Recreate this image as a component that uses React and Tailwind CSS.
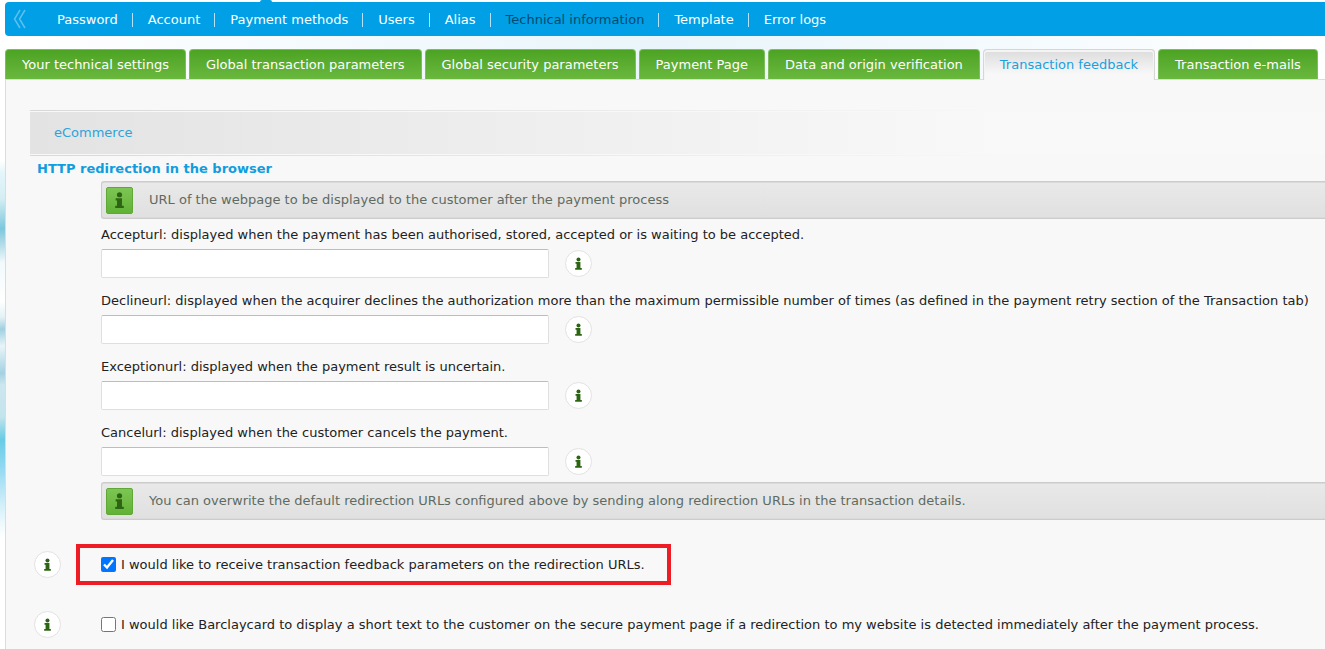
import { useState } from 'react'

const menuItems = [
  'Password',
  'Account',
  'Payment methods',
  'Users',
  'Alias',
  'Technical information',
  'Template',
  'Error logs',
]

const tabs = [
  'Your technical settings',
  'Global transaction parameters',
  'Global security parameters',
  'Payment Page',
  'Data and origin verification',
  'Transaction feedback',
  'Transaction e-mails',
]

const urlFields = [
  {
    id: 'accepturl',
    label: 'Accepturl: displayed when the payment has been authorised, stored, accepted or is waiting to be accepted.',
  },
  {
    id: 'declineurl',
    label:
      'Declineurl: displayed when the acquirer declines the authorization more than the maximum permissible number of times (as defined in the payment retry section of the Transaction tab)',
  },
  {
    id: 'exceptionurl',
    label: 'Exceptionurl: displayed when the payment result is uncertain.',
  },
  {
    id: 'cancelurl',
    label: 'Cancelurl: displayed when the customer cancels the payment.',
  },
]

const InfoGlyph = ({ className }) => (
  <svg viewBox="0 0 8 14" className={className} fill="currentColor" aria-hidden="true">
    <circle cx="4" cy="2.3" r="2.3" />
    <path d="M.6 5.4h5.6V12h1.6v2H.2v-2h1.6V7.4H.6z" />
  </svg>
)

const InfoButton = ({ label }) => (
  <button
    type="button"
    aria-label={label}
    className="flex size-[27px] shrink-0 items-center justify-center rounded-full border border-[#e2e2e2] bg-white text-[#2c6414]"
  >
    <InfoGlyph className="h-[13px] w-[7px]" />
  </button>
)

const Notice = ({ children }) => (
  <div className="flex h-[38px] items-center rounded-l-[3px] border-y border-l border-[#cccccc] bg-linear-to-b from-[#e9e9e9] to-[#e0e0e0] pl-1 text-[#5f6b62] shadow-[inset_0_1px_0_#dadada,inset_0_-1px_0_#dadada]">
    <span className="mr-4 flex size-[27px] shrink-0 items-center justify-center rounded-[2px] border border-[#5fa838] bg-linear-to-b from-[#7cc653] to-[#62b236] text-[#2c6414]">
      <InfoGlyph className="h-4 w-[9px]" />
    </span>
    <p>{children}</p>
  </div>
)

const OptionRow = ({ id, label, checked, onChange, highlighted }) => (
  <div className="flex items-center gap-[15px]">
    <InfoButton label={`Help: ${label}`} />
    <label
      htmlFor={id}
      className={`flex h-[41px] items-center gap-[5px] border-4 pr-[22px] pl-[21px] ${
        highlighted ? 'border-[#ee1c25]' : 'border-transparent'
      }`}
    >
      <input
        id={id}
        type="checkbox"
        checked={checked}
        onChange={(e) => onChange(e.target.checked)}
        className="size-[15px] accent-[#0075ff]"
      />
      {label}
    </label>
  </div>
)

const App = () => {
  const [activeTab, setActiveTab] = useState('Transaction feedback')
  const [feedback, setFeedback] = useState(true)
  const [shortText, setShortText] = useState(false)

  return (
    <div className="flex min-h-screen overflow-hidden bg-white font-['DejaVu_Sans',Verdana,sans-serif] text-[13px] leading-5 whitespace-nowrap text-[#222]">
      {/* Blue swirl at the page edge */}
      <div className="w-[5px] shrink-0 bg-[linear-gradient(175deg,#fff_160px,#e4f6fa_172px,#d4eef4_198px,#7cc8dc_228px,#b4dce8_244px,#f2fafc_262px,#fff_300px,#e4f2f6_316px,#a0d0e0_328px,#e8f4f8_345px,#a4d2e2_372px,#cce6ee_384px,#c4e4ec_415px,#68cce4_438px,#90d8f2_465px,#b4e4f6_485px,#e4f6fc_515px,#fff_535px)]" />

      <div className="flex min-w-0 flex-1 flex-col">
        {/* Section menu */}
        <div className="ml-[255px] h-[2px] w-3 rounded-t-full bg-[#009fe6]" />
        <nav className="flex h-[34px] shrink-0 items-center rounded-l-[4px] bg-[#009fe6] text-white">
          <button type="button" aria-label="Back" className="ml-2 text-[#5cc0ee]">
            <svg viewBox="0 0 13 20" className="h-5 w-[13px]" fill="none" stroke="currentColor" strokeWidth="1.5">
              <path d="M7 1 1.5 10 7 19M12 1 6.5 10 12 19" />
            </svg>
          </button>
          <ul className="ml-4 flex items-center divide-x divide-[#b4e2f8] pt-[2px]">
            {menuItems.map((item) => (
              <li key={item} className="h-[14px] pr-[14px] pl-[15px]">
                <a
                  href="#"
                  className={`block leading-[14px] ${item === 'Technical information' ? 'text-[#004a6e]' : ''}`}
                >
                  {item}
                </a>
              </li>
            ))}
          </ul>
        </nav>

        {/* Tabs */}
        <div className="flex shrink-0 gap-[3px] bg-linear-to-r from-white via-[#e9f5fa] to-white pt-[13px]">
          {tabs.map((tab) => (
            <button
              key={tab}
              type="button"
              onClick={() => setActiveTab(tab)}
              className={`shrink-0 rounded-t-[4px] border-x border-t px-4 ${
                tab === activeTab
                  ? 'relative -mb-px h-[31px] border-[#d6d6d6] bg-linear-to-b from-[#dcdcdc] to-[#f8f8f8] to-80% text-[#1a9fe0] shadow-[inset_0_1px_0_1px_#f4f4f4]'
                  : 'h-[30px] border-[#7fbd5c] bg-linear-to-b from-[#4ca322] to-[#6ab83e] text-white'
              }`}
            >
              {tab}
            </button>
          ))}
        </div>

        <main className="flex-1 border-t border-l border-[#dcdcdc] bg-[#f8f8f8] pt-[30px] pl-6">
          <div className="bg-linear-to-r from-[#d8d8d8] to-transparent to-[980px] py-px">
            <div className="bg-[#f8f8f8] py-px">
              <h2 className="bg-linear-to-r from-[#e3e3e3] to-[#f9f9f9] to-[980px] py-[11px] pl-6 text-[#2da3dc]">
                eCommerce
              </h2>
            </div>
          </div>

          <h3 className="mt-[3px] pl-[7px] font-bold text-[#0f9de0]">HTTP redirection in the browser</h3>

          <section className="mt-[2px] pl-[71px]">
            <Notice>URL of the webpage to be displayed to the customer after the payment process</Notice>
            <div className="flex flex-col gap-[13px] py-[6px]">
              {urlFields.map((field) => (
                <div key={field.id}>
                  <label htmlFor={field.id} className="block">
                    {field.label}
                  </label>
                  <div className="mt-1 flex h-[29px] items-center gap-4">
                    <input
                      id={field.id}
                      type="text"
                      className="h-full w-[448px] rounded-[2px] border border-[#dfdfdf] border-t-[#bdbdbd] bg-white px-2"
                    />
                    <InfoButton label={`Help: ${field.id}`} />
                  </div>
                </div>
              ))}
            </div>
            <Notice>
              You can overwrite the default redirection URLs configured above by sending along redirection URLs in the
              transaction details.
            </Notice>
          </section>

          <section className="mt-6 flex flex-col gap-[19px] pl-1">
            <OptionRow
              id="feedback-params"
              label="I would like to receive transaction feedback parameters on the redirection URLs."
              checked={feedback}
              onChange={setFeedback}
              highlighted
            />
            <OptionRow
              id="short-text"
              label="I would like Barclaycard to display a short text to the customer on the secure payment page if a redirection to my website is detected immediately after the payment process."
              checked={shortText}
              onChange={setShortText}
            />
          </section>
        </main>
      </div>
    </div>
  )
}

export default App
